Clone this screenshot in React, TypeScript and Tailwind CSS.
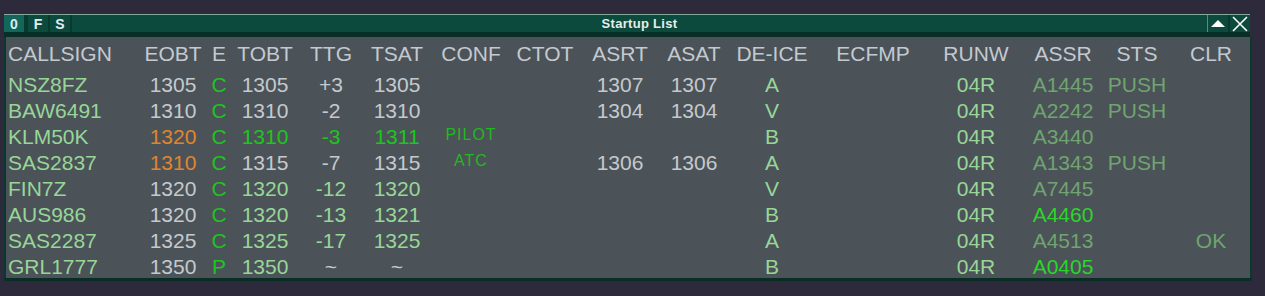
import React from "react";

const GRAY = "text-[#c5c9cd]";
const LG = "text-[#98d698]";
const BG = "text-[#1fc41f]";
const OR = "text-[#e0852c]";
const DIM = "text-[#70a470]";
const BRIGHT = "text-[#2ad62a]";

type Cell = { t: string; c: string } | null;

const rows: Cell[][] = [
  [
    { t: "NSZ8FZ", c: LG }, { t: "1305", c: GRAY }, { t: "C", c: BG }, { t: "1305", c: GRAY },
    { t: "+3", c: GRAY }, { t: "1305", c: GRAY }, null, null, { t: "1307", c: GRAY }, { t: "1307", c: GRAY },
    { t: "A", c: LG }, null, { t: "04R", c: LG }, { t: "A1445", c: DIM }, { t: "PUSH", c: DIM }, null,
  ],
  [
    { t: "BAW6491", c: LG }, { t: "1310", c: GRAY }, { t: "C", c: BG }, { t: "1310", c: GRAY },
    { t: "-2", c: GRAY }, { t: "1310", c: GRAY }, null, null, { t: "1304", c: GRAY }, { t: "1304", c: GRAY },
    { t: "V", c: LG }, null, { t: "04R", c: LG }, { t: "A2242", c: DIM }, { t: "PUSH", c: DIM }, null,
  ],
  [
    { t: "KLM50K", c: LG }, { t: "1320", c: OR }, { t: "C", c: BG }, { t: "1310", c: BG },
    { t: "-3", c: BG }, { t: "1311", c: BG }, { t: "PILOT", c: "conf" }, null, null, null,
    { t: "B", c: LG }, null, { t: "04R", c: LG }, { t: "A3440", c: DIM }, null, null,
  ],
  [
    { t: "SAS2837", c: LG }, { t: "1310", c: OR }, { t: "C", c: BG }, { t: "1315", c: GRAY },
    { t: "-7", c: GRAY }, { t: "1315", c: GRAY }, { t: "ATC", c: "conf" }, null, { t: "1306", c: GRAY }, { t: "1306", c: GRAY },
    { t: "A", c: LG }, null, { t: "04R", c: LG }, { t: "A1343", c: DIM }, { t: "PUSH", c: DIM }, null,
  ],
  [
    { t: "FIN7Z", c: LG }, { t: "1320", c: GRAY }, { t: "C", c: BG }, { t: "1320", c: LG },
    { t: "-12", c: LG }, { t: "1320", c: LG }, null, null, null, null,
    { t: "V", c: LG }, null, { t: "04R", c: LG }, { t: "A7445", c: DIM }, null, null,
  ],
  [
    { t: "AUS986", c: LG }, { t: "1320", c: GRAY }, { t: "C", c: BG }, { t: "1320", c: LG },
    { t: "-13", c: LG }, { t: "1321", c: LG }, null, null, null, null,
    { t: "B", c: LG }, null, { t: "04R", c: LG }, { t: "A4460", c: BRIGHT }, null, null,
  ],
  [
    { t: "SAS2287", c: LG }, { t: "1325", c: GRAY }, { t: "C", c: BG }, { t: "1325", c: LG },
    { t: "-17", c: LG }, { t: "1325", c: LG }, null, null, null, null,
    { t: "A", c: LG }, null, { t: "04R", c: LG }, { t: "A4513", c: DIM }, null, { t: "OK", c: DIM },
  ],
  [
    { t: "GRL1777", c: LG }, { t: "1350", c: GRAY }, { t: "P", c: BG }, { t: "1350", c: LG },
    { t: "~", c: GRAY }, { t: "~", c: GRAY }, null, null, null, null,
    { t: "B", c: LG }, null, { t: "04R", c: LG }, { t: "A0405", c: BRIGHT }, null, null,
  ],
];

const headers = [
  "CALLSIGN", "EOBT", "E", "TOBT", "TTG", "TSAT", "CONF", "CTOT", "ASRT", "ASAT",
  "DE-ICE", "ECFMP", "RUNW", "ASSR", "STS", "CLR",
];

const GRID =
  "grid grid-cols-[137px_60px_32px_60px_72px_60px_88px_60px_90px_58px_98px_104px_102px_72px_76px_72px] h-[26px] leading-[26px] text-[21px] whitespace-nowrap";

function DataRow({ cells }: { cells: Cell[] }) {
  return (
    <div className={GRID}>
      {cells.map((cell, i) => {
        const align = i === 0 ? "text-left pl-[2px]" : "text-center";
        if (!cell) return <div key={i} className={align} />;
        if (cell.c === "conf") {
          return (
            <div key={i} className="text-center text-[16px] leading-[22px] tracking-[1px] text-[#22b822]">
              {cell.t}
            </div>
          );
        }
        return (
          <div key={i} className={`${align} ${cell.c}`}>
            {cell.t}
          </div>
        );
      })}
    </div>
  );
}

export default function App() {
  return (
    <div className="w-[1265px] h-[296px] bg-[#2c2a3b] pt-[14px] pl-[4px] font-['Liberation_Sans',Arial,sans-serif] overflow-hidden">
      <div className="w-[1248px] flex flex-col">
        {/* title bar */}
        <div className="h-[1px] bg-[#84aa9e] mr-[2px]" />
        <div className="h-[17px] flex bg-[#0c4a3d]">
          <div className="w-[20px] bg-[#12665a] flex items-center justify-center text-[14px] font-bold text-[#d6ecf2] leading-none">
            0
          </div>
          <div className="w-[4px] bg-[#083a30]" />
          <div className="w-[20px] flex items-center justify-center text-[14px] font-bold text-[#e4ecf0] leading-none">
            F
          </div>
          <div className="w-[2px] bg-[#083a30]" />
          <div className="w-[20px] flex items-center justify-center text-[14px] font-bold text-[#e4ecf0] leading-none">
            S
          </div>
          <div className="w-[2px] bg-[#083a30]" />
          <div className="flex-1 flex items-center justify-center text-[13px] font-bold tracking-[0.3px] text-[#e6eee8] leading-none">
            Startup List
          </div>
          <div className="w-[1px] bg-[#5f8a7e]" />
          <div className="w-[20px] flex items-center justify-center">
            <svg width="14" height="8" viewBox="0 0 14 8">
              <polygon points="7,0 14,7 0,7" fill="#ffffff" />
            </svg>
          </div>
          <div className="w-[2px] bg-[#083a30]" />
          <div className="w-[20px] flex items-center justify-center">
            <svg width="16" height="16" viewBox="0 0 16 16">
              <path d="M1 1 L15 15 M15 1 L1 15" stroke="#ffffff" strokeWidth="1.6" />
            </svg>
          </div>
          <div className="w-[2px] bg-[#2c2a3b]" />
        </div>
        <div className="h-[5px] bg-[#072f27] mr-[2px]" />
        {/* body */}
        <div className="h-[241px] bg-[#4b5358] border-l-2 border-r-2 border-[#0a3a2f] pt-[4px] overflow-hidden">
          <div className={`${GRID} text-[#c4c9d0]`}>
            {headers.map((h, i) => (
              <div key={h} className={i === 0 ? "text-left pl-[2px]" : "text-center"}>
                {h}
              </div>
            ))}
          </div>
          <div className="mt-[5px] flex flex-col">
            {rows.map((r, i) => (
              <DataRow key={i} cells={r} />
            ))}
          </div>
        </div>
        <div className="h-[3px] bg-[#0a2e26]" />
      </div>
    </div>
  );
}
